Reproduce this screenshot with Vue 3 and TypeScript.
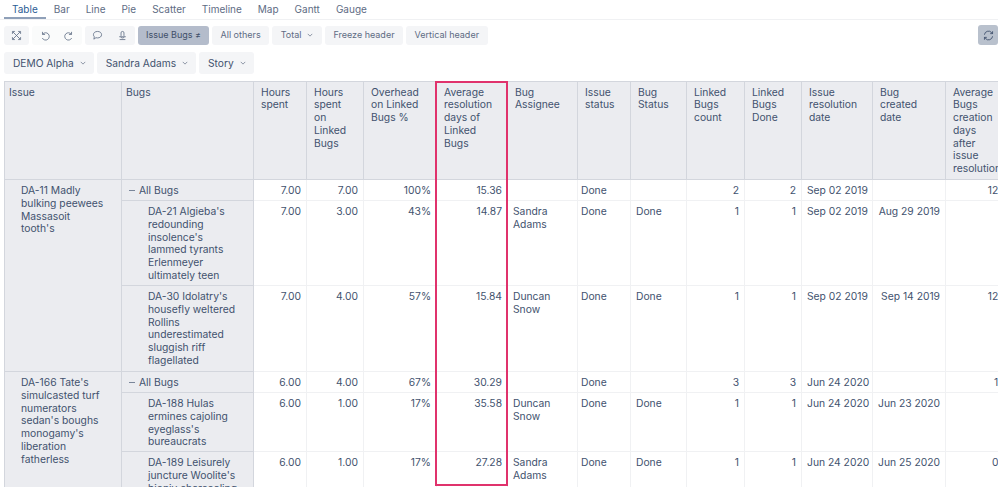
<template>
  <div class="page">
    <nav class="tabs">
      <a v-for="(t, i) in tabs" :key="t" class="tab" :class="{ active: i === 0 }">{{ t }}</a>
    </nav>

    <div class="toolbar">
      <button class="btn icon" title="Full screen">
        <svg viewBox="0 0 16 16"><path d="M3.500 3.500l9 9M12.500 3.500l-9 9M3 6V3h3M10 3h3v3M3 10v3h3M13 10v3h-3" /></svg>
      </button>
      <div class="group faded">
        <button class="btn icon" title="Undo">
          <svg viewBox="0 0 16 16"><path d="M5.500 3.500v3.200h3.200M5.700 6.500a4.500 4.500 0 1 1-.4 4.600" /></svg>
        </button>
        <button class="btn icon" title="Redo">
          <svg viewBox="0 0 16 16"><path d="M10.500 3.500v3.200H7.300M10.300 6.500a4.500 4.500 0 1 0 .4 4.600" /></svg>
        </button>
      </div>
      <div class="group">
        <button class="btn icon" title="Comment">
          <svg viewBox="0 0 16 16"><path d="M8 3c3 0 5 1.700 5 4s-2 4-5 4c-.7 0-1.300-.1-1.900-.3L3.500 12.500l.6-2.900C3.400 8.900 3 8 3 7c0-2.300 2-4 5-4z" /></svg>
        </button>
        <button class="btn icon" title="Save">
          <svg viewBox="0 0 16 16"><path d="M6.200 8.500V4.800a1.800 1.800 0 0 1 3.600 0v3.700M4 9.500h8M5.500 9.500c.4 1 1.300 1.500 2.500 1.500s2.100-.5 2.500-1.500M4.500 13h7" /></svg>
        </button>
      </div>
      <button class="btn selected">Issue Bugs ≠</button>
      <button class="btn">All others</button>
      <button class="btn">
        Total
        <svg class="caret" viewBox="0 0 8 5"><path d="M1 1l3 3 3-3" /></svg>
      </button>
      <button class="btn">Freeze header</button>
      <button class="btn">Vertical header</button>
      <button class="btn icon refresh" title="Refresh">
        <svg viewBox="0 0 16 16"><path d="M3 7a5 5 0 0 1 8.700-2.700L13 5.500M13 2.800v2.900h-2.900M13 9a5 5 0 0 1-8.700 2.700L3 10.500M3 13.200v-2.900h2.900" /></svg>
      </button>
    </div>

    <div class="filters">
      <button v-for="f in filters" :key="f" class="filter">
        {{ f }}
        <svg class="caret" viewBox="0 0 8 5"><path d="M1 1l3 3 3-3" /></svg>
      </button>
    </div>

    <div class="report">
      <table>
        <colgroup>
          <col v-for="(w, i) in widths" :key="i" :style="{ width: w + 'px' }" />
        </colgroup>
        <thead>
          <tr>
            <th v-for="h in headers" :key="h">{{ h }}</th>
          </tr>
        </thead>
        <tbody>
          <template v-for="group in groups" :key="group.issue">
            <tr v-for="(row, i) in group.rows" :key="row.name" class="row" :style="{ height: row.height + 'px' }">
              <td v-if="i === 0" class="side issue" :rowspan="group.rows.length">{{ group.issue }}</td>
              <td class="side" :class="row.total ? 'total' : 'bug'">
                <span v-if="row.total" class="minus"></span>{{ row.name }}
              </td>
              <td v-for="(v, c) in row.values" :key="c" :class="columnAlign[c]">{{ v }}</td>
            </tr>
          </template>
        </tbody>
      </table>
      <div class="highlight"></div>
    </div>
  </div>
</template>

<script setup lang="ts">
interface Row {
  name: string
  total?: boolean
  height: number
  values: string[]
}

interface Group {
  issue: string
  rows: Row[]
}

const tabs = ['Table', 'Bar', 'Line', 'Pie', 'Scatter', 'Timeline', 'Map', 'Gantt', 'Gauge']
const filters = ['DEMO Alpha', 'Sandra Adams', 'Story']

const widths = [117, 132, 53, 57, 73, 71, 70, 53, 56, 58, 57, 71, 73, 74]

const headers = [
  'Issue',
  'Bugs',
  'Hours spent',
  'Hours spent on Linked Bugs',
  'Overhead on Linked Bugs %',
  'Average resolution days of Linked Bugs',
  'Bug Assignee',
  'Issue status',
  'Bug Status',
  'Linked Bugs count',
  'Linked Bugs Done',
  'Issue resolution date',
  'Bug created date',
  'Average Bugs creation days after issue resolution'
]

const columnAlign = ['num', 'num', 'num', 'num', 'txt', 'status', 'txt', 'num', 'num', 'num', 'num', 'num']

const groups: Group[] = [
  {
    issue: "DA-11 Madly bulking peewees Massasoit tooth's",
    rows: [
      {
        name: 'All Bugs',
        total: true,
        height: 21,
        values: ['7.00', '7.00', '100%', '15.36', '', 'Done', '', '2', '2', 'Sep 02 2019', '', '12.00']
      },
      {
        name: "DA-21 Algieba's redounding insolence's lammed tyrants Erlenmeyer ultimately teen",
        height: 85,
        values: ['7.00', '3.00', '43%', '14.87', 'Sandra Adams', 'Done', 'Done', '1', '1', 'Sep 02 2019', 'Aug 29 2019', '']
      },
      {
        name: "DA-30 Idolatry's housefly weltered Rollins underestimated sluggish riff flagellated",
        height: 86,
        values: ['7.00', '4.00', '57%', '15.84', 'Duncan Snow', 'Done', 'Done', '1', '1', 'Sep 02 2019', 'Sep 14 2019', '12.00']
      }
    ]
  },
  {
    issue: "DA-166 Tate's simulcasted turf numerators sedan's boughs monogamy's liberation fatherless",
    rows: [
      {
        name: 'All Bugs',
        total: true,
        height: 21,
        values: ['6.00', '4.00', '67%', '30.29', '', 'Done', '', '3', '3', 'Jun 24 2020', '', '1.00']
      },
      {
        name: "DA-188 Hulas ermines cajoling eyeglass's bureaucrats",
        height: 59,
        values: ['6.00', '1.00', '17%', '35.58', 'Duncan Snow', 'Done', 'Done', '1', '1', 'Jun 24 2020', 'Jun 23 2020', '']
      },
      {
        name: "DA-189 Leisurely juncture Woolite's bioniy charcoaling",
        height: 72,
        values: ['6.00', '1.00', '17%', '27.28', 'Sandra Adams', 'Done', 'Done', '1', '1', 'Jun 24 2020', 'Jun 25 2020', '0.00']
      }
    ]
  }
]
</script>

<style>
html,
body {
  margin: 0;
  height: 487px;
  overflow: hidden;
  background: #fff;
}
</style>

<style scoped>
.page {
  height: 487px;
  overflow: hidden;
  font-family: Inter, "Liberation Sans", sans-serif;
  font-size: 10.3px;
  line-height: 12.8px;
  color: #42526e;
}

.tabs {
  display: flex;
  height: 20px;
  padding-left: 4px;
  border-bottom: 1px solid #f0f1f3;
  box-sizing: border-box;
}

.tab {
  padding: 3px 8px 0;
  height: 19px;
  box-sizing: border-box;
  font-size: 10px;
  color: #5e6c84;
}

.tab.active {
  color: #2b5c94;
  border-bottom: 2px solid #8fa0b8;
}

.toolbar {
  display: flex;
  align-items: center;
  gap: 3px;
  margin-top: 5px;
  height: 20px;
  padding: 0 0 0 4px;
}

.group {
  display: flex;
  background: #f4f5f7;
  border-radius: 3px;
}

.group.faded {
  background: #fafbfb;
}

.group.faded svg {
  stroke: #c1c7d0;
}

button {
  border: 0;
  font: inherit;
  color: inherit;
}

.btn {
  display: flex;
  align-items: center;
  gap: 6px;
  height: 19px;
  padding: 0 8.500px;
  border-radius: 3px;
  background: #f4f5f7;
  font-size: 9px;
  white-space: nowrap;
  color: #5e6c84;
}

.group .btn {
  background: transparent;
}

.btn.icon {
  width: 25px;
  padding: 0;
  justify-content: center;
}

.btn.icon svg {
  width: 13px;
  height: 13px;
  fill: none;
  stroke: #5e6c84;
  stroke-width: 1;
}

.btn.selected {
  width: 71px;
  padding: 0;
  justify-content: center;
  background: #b4bccb;
  color: #3f4f69;
}

.btn.refresh {
  margin-left: auto;
  width: 20px;
  height: 20px;
  background: #b9c1cd;
}

.btn.refresh svg {
  stroke: #344563;
}

.caret {
  width: 6px;
  height: 4px;
  fill: none;
  stroke: #6b778c;
  stroke-width: 1;
}

.filters {
  display: flex;
  gap: 3px;
  margin-top: 7px;
  padding-left: 4px;
}

.filter {
  display: flex;
  align-items: center;
  gap: 6px;
  height: 22px;
  padding: 0 8px 0 9px;
  background: #f4f5f7;
  border-radius: 3px;
  font-size: 10.200px;
  color: #42526e;
}

.report {
  position: relative;
  margin: 7px 0 0 4px;
  overflow: hidden;
  height: 406px;
}

table {
  table-layout: fixed;
  width: 1015px;
  border-collapse: collapse;
  border-top: 1px solid #d5d8de;
  border-left: 1px solid #d5d8de;
}

th {
  height: 98px;
  padding: 3.500px 8px 0 7px;
  vertical-align: top;
  text-align: left;
  font-weight: 400;
  background: #ebecf0;
  border: 1px solid #d3d6dd;
  box-sizing: border-box;
}

th:nth-child(-n + 2) {
  padding-left: 4px;
}

th:last-child {
  padding-right: 20px;
}

td {
  padding: 4px 5px 0;
  vertical-align: top;
  border: 1px solid #f0f1f3;
  box-sizing: border-box;
}

td.num {
  text-align: right;
  white-space: nowrap;
}

td.status {
  padding-left: 3px;
}

td.side {
  background: #ebecf0;
  border: 1px solid #d3d6dd;
}

.issue {
  padding-left: 16px;
  padding-right: 16px;
}

.total {
  padding-left: 17px;
  position: relative;
}

.bug {
  padding-left: 26px;
  padding-right: 15px;
}

.minus {
  position: absolute;
  left: 7px;
  top: 10px;
  width: 6px;
  height: 1px;
  background: #7a869a;
}

.highlight {
  position: absolute;
  left: 431px;
  top: 0;
  width: 73px;
  height: 405px;
  border: 2.500px solid #e0326c;
  box-sizing: border-box;
}
</style>
